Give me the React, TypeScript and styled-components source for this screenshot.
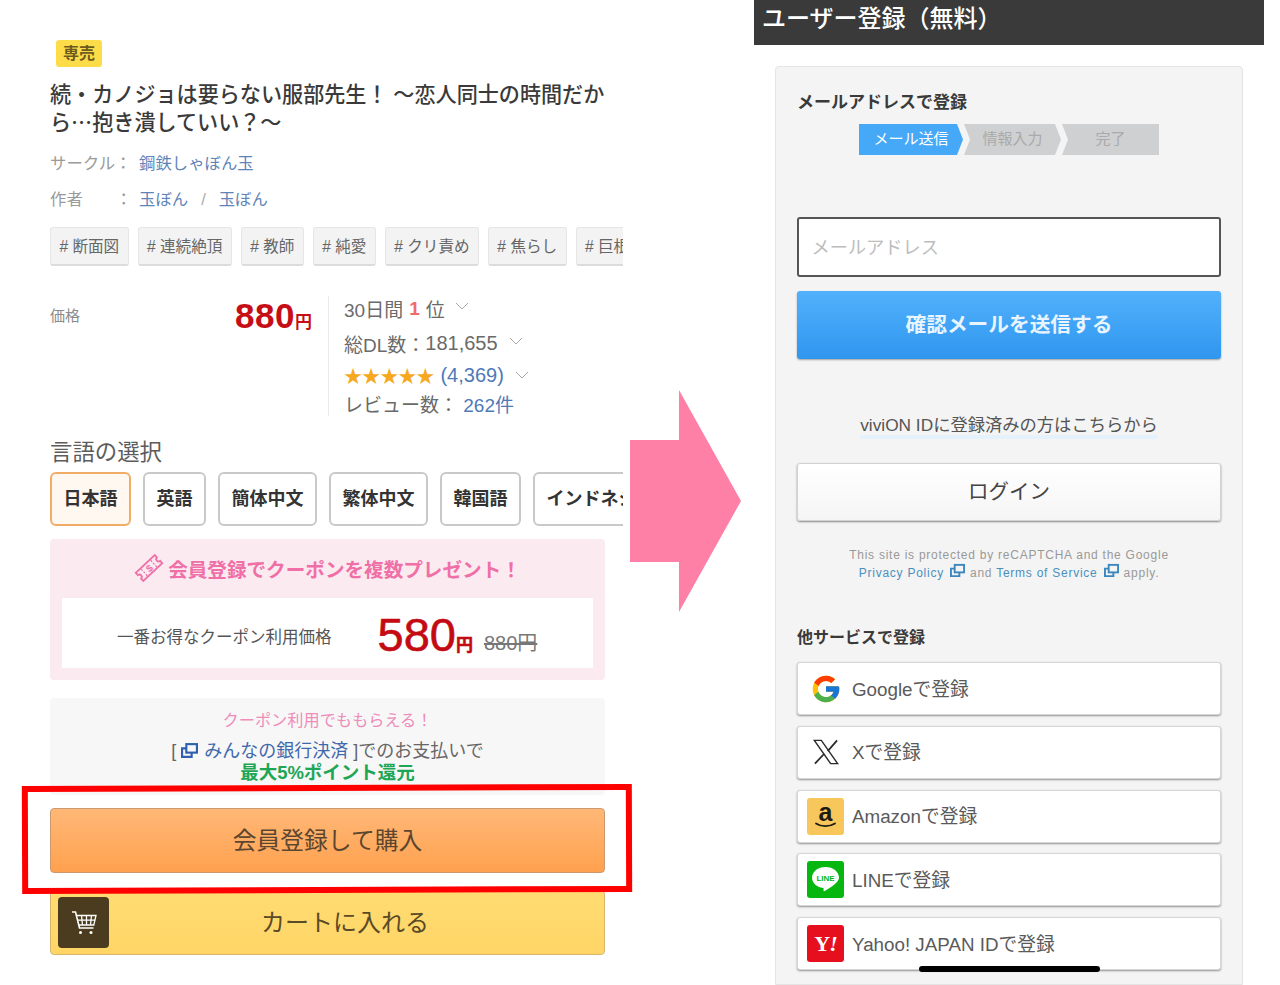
import React from "react";
import styled, { createGlobalStyle } from "styled-components";
import { FcGoogle } from "react-icons/fc";

const GlobalStyle = createGlobalStyle`
  html, body {
    margin: 0;
    padding: 0;
    background: #fff;
  }
  * {
    box-sizing: border-box;
  }
  body {
    font-family: "Liberation Sans", "Noto Sans CJK JP", sans-serif;
  }
`;

const Page = styled.div`
  position: relative;
  width: 1280px;
  height: 985px;
  overflow: hidden;
  display: flex;
`;

const ProductColumn = styled.div`
  width: 630px;
  flex: none;
  padding: 40px 0 0 50px;
  display: flex;
  flex-direction: column;
`;

const Badge = styled.div`
  width: 46px;
  height: 27px;
  margin-left: 6px;
  border-radius: 3px;
  background: #fddc4a;
  color: #6d5a1c;
  font-size: 16px;
  font-weight: 700;
  line-height: 27px;
  text-align: center;
`;

const Title = styled.h1`
  height: 56px;
  margin: 14px 0 0;
  font-size: 21.1px;
  line-height: 28px;
  font-weight: 500;
  color: #3a3a3a;
  white-space: nowrap;
`;

const CjkGlyph = styled.span`
  font-family: "Noto Sans CJK JP", sans-serif;
  line-height: 0;
`;

const MetaRow = styled.div<{ $top: number }>`
  display: flex;
  height: 24px;
  margin-top: ${(p) => p.$top}px;
  font-size: 16.4px;
  line-height: 24px;
  color: #9a9a9a;
`;

const MetaLabel = styled.span`
  width: 89px;
  white-space: pre;
`;

const MetaLink = styled.span`
  color: #5f84b8;
`;

const MetaSlash = styled.span`
  margin: 0 13px;
  color: #aaa;
`;

const ClipRow = styled.div<{ $top: number; $gap: number }>`
  display: flex;
  gap: ${(p) => p.$gap}px;
  width: 573px;
  margin-top: ${(p) => p.$top}px;
  overflow: hidden;
`;

const Tag = styled.div`
  flex: none;
  height: 39px;
  padding: 0 8.4px;
  border: 1px solid #e6e6e6;
  border-bottom: 2px solid #dcdcdc;
  border-radius: 3px;
  background: #f3f3f3;
  color: #666;
  font-size: 15.6px;
  line-height: 37px;
  white-space: nowrap;
`;

const PriceBlock = styled.div`
  display: flex;
  height: 120px;
  margin-top: 30px;
`;

const PriceCell = styled.div`
  width: 262px;
  display: flex;
  justify-content: space-between;
  align-items: flex-start;
`;

const PriceLabel = styled.span`
  margin-top: 10px;
  font-size: 15px;
  line-height: 20px;
  color: #8b8b8b;
`;

const PriceValue = styled.span`
  margin-top: -1px;
  color: #c70d16;
  font-size: 35px;
  letter-spacing: 0.5px;
  line-height: 42px;
  font-weight: 700;
`;

const Yen = styled.span<{ $size: number }>`
  font-size: ${(p) => p.$size}px;
  font-weight: 700;
  letter-spacing: 0;
`;

const Stats = styled.div`
  margin-left: 16px;
  padding-left: 15px;
  border-left: 1px solid #e9e9e9;
  display: flex;
  flex-direction: column;
  font-size: 19px;
  color: #6a6a6a;
`;

const StatLine = styled.div<{ $height: number; $pad?: number }>`
  display: flex;
  align-items: center;
  height: ${(p) => p.$height}px;
  padding-top: ${(p) => p.$pad || 0}px;
  white-space: pre;
`;

const StatNumber = styled.span`
  font-size: 20px;
`;

const Rank = styled.span`
  color: #ef6a6a;
  font-weight: 700;
  margin: 0 6px;
`;

const Stars = styled.span`
  color: #f6a81f;
  font-size: 18.2px;
  letter-spacing: -0.1px;
  margin-right: 6px;
`;

const BlueText = styled.span`
  color: #4f79b8;
`;

const Chevron = styled.svg<{ $left: number; $lift: number }>`
  width: 14px;
  height: 8px;
  margin-left: ${(p) => p.$left}px;
  margin-top: -${(p) => p.$lift}px;
  fill: none;
  stroke: #a9a9a9;
  stroke-width: 1;
`;

const SectionTitle = styled.div`
  margin-top: 21px;
  height: 32px;
  font-size: 22.4px;
  line-height: 32px;
  color: #5c5c5c;
`;

const LangButton = styled.div<{ $active?: boolean }>`
  flex: none;
  height: 54px;
  padding: 0 11.5px;
  border: 2px solid ${(p) => (p.$active ? "#f1ad68" : "#c9c9c9")};
  border-radius: 6px;
  background: ${(p) => (p.$active ? "#fff8f0" : "#fff")};
  color: #333;
  font-size: 18px;
  font-weight: 700;
  line-height: 50px;
  white-space: nowrap;
`;

const CouponBox = styled.div`
  width: 555px;
  height: 141px;
  margin-top: 13px;
  padding: 12px;
  border-radius: 4px;
  background: #fbebf1;
  display: flex;
  flex-direction: column;
`;

const CouponHead = styled.div`
  height: 34px;
  display: flex;
  justify-content: center;
  align-items: center;
  gap: 4px;
  color: #ef6fa6;
  font-size: 19.6px;
  font-weight: 700;
`;

const CouponInner = styled.div`
  height: 70px;
  margin-top: 13px;
  padding: 6px 0 0 55px;
  background: #fff;
  display: flex;
  align-items: center;
  color: #555;
  font-size: 16.5px;
`;

const CouponPrice = styled.span`
  margin: 9px 0 0 46px;
  color: #c40a12;
  font-size: 47px;
  line-height: 56px;
  -webkit-text-stroke: 0.6px #c40a12;
`;

const OldPrice = styled.span`
  margin: 10px 0 0 11px;
  color: #777;
  font-size: 20px;
  text-decoration: line-through;
`;

const PointBox = styled.div`
  width: 555px;
  height: 97px;
  margin-top: 18px;
  padding-top: 10px;
  border-radius: 4px;
  background: #f7f7f7;
  text-align: center;
`;

const PointLead = styled.div`
  height: 24px;
  line-height: 24px;
  color: #ee8dba;
  font-size: 16.2px;
`;

const PointLine = styled.div`
  height: 34px;
  padding-top: 3px;
  line-height: 34px;
  color: #666;
  font-size: 18px;
  display: flex;
  justify-content: center;
  align-items: center;
  white-space: pre;
`;

const PointLink = styled.span`
  color: #3f69ad;
  margin-left: 6px;
`;

const PointGreen = styled.div`
  height: 20px;
  margin-top: -3px;
  line-height: 20px;
  color: #1ea655;
  font-size: 18.5px;
  font-weight: 700;
`;

const BuyButton = styled.div`
  width: 555px;
  height: 65px;
  margin-top: 13px;
  border: 1px solid #cc9870;
  border-radius: 4px;
  background: linear-gradient(#ffb877, #ffa14f);
  color: #5b4630;
  font-size: 23.8px;
  line-height: 63px;
  text-align: center;
`;

const CartButton = styled.div`
  width: 555px;
  height: 65px;
  margin-top: 17px;
  padding: 6px 23px 6px 7px;
  border: 1px solid #d8b56d;
  border-radius: 4px;
  background: linear-gradient(#ffdc72, #ffd566);
  color: #5a4a26;
  font-size: 24px;
  display: flex;
  align-items: center;
`;

const CartTile = styled.div`
  width: 51px;
  height: 51px;
  flex: none;
  border-radius: 4px;
  background: #4c3c1f;
  display: flex;
  align-items: center;
  justify-content: center;
`;

const CartLabel = styled.span`
  flex: 1;
  margin-top: -4px;
  text-align: center;
`;

const ArrowColumn = styled.div`
  width: 124px;
  flex: none;
  padding-top: 390px;
`;

const ArrowShape = styled.svg`
  display: block;
  width: 111px;
  height: 222px;
  fill: #ff80a6;
`;

const RegisterColumn = styled.div`
  width: 510px;
  flex: none;
  display: flex;
  flex-direction: column;
`;

const Header = styled.div`
  height: 45px;
  padding: 0 0 6px 8px;
  background: #3a3a3a;
  color: #fff;
  font-size: 24px;
  font-weight: 500;
  line-height: 38px;
`;

const Card = styled.div`
  width: 468px;
  flex: 1;
  margin: 21px 0 0 21px;
  padding: 24px 21px 0;
  border: 1px solid #e4e4e4;
  border-radius: 4px 4px 0 0;
  background: #f4f4f4;
`;

const CardHeading = styled.div`
  font-size: 17px;
  line-height: 24px;
  font-weight: 700;
  color: #3a3a3a;
`;

const Stepper = styled.div`
  display: flex;
  margin: 9px 0 0 62px;
`;

const Step = styled.div<{ $state: "current" | "todo"; $width: number; $first?: boolean }>`
  width: ${(p) => p.$width}px;
  height: 31px;
  margin-left: ${(p) => (p.$first ? 0 : 1)}px;
  background: ${(p) => (p.$state === "current" ? "#45a9f8" : "#cfd0d1")};
  color: ${(p) => (p.$state === "current" ? "#fff" : "#aaa")};
  font-size: 15px;
  line-height: 30px;
  text-align: center;
  clip-path: ${(p) =>
    p.$first
      ? "polygon(0 0, calc(100% - 6px) 0, 100% 50%, calc(100% - 6px) 100%, 0 100%)"
      : "polygon(0 0, calc(100% - 6px) 0, 100% 50%, calc(100% - 6px) 100%, 0 100%, 6px 50%)"};
  &:last-child {
    clip-path: polygon(0 0, 100% 0, 100% 100%, 0 100%, 6px 50%);
  }
`;

const EmailInput = styled.input`
  display: block;
  width: 424px;
  height: 60px;
  margin-top: 62px;
  padding: 3px 12.5px 0;
  border: 2px solid #555;
  border-radius: 3px;
  background: #fff;
  font-family: inherit;
  font-size: 18.2px;
  &::placeholder {
    color: #bdbdbd;
    opacity: 1;
  }
`;

const SendButton = styled.div`
  width: 424px;
  height: 68px;
  margin-top: 14px;
  border-radius: 3px;
  background: linear-gradient(#52b1fb, #2f96ef);
  box-shadow: 0 1px 2px rgba(0, 0, 0, 0.35);
  color: #e8f4ff;
  font-size: 20.7px;
  font-weight: 700;
  line-height: 67px;
  text-align: center;
`;

const LoginLead = styled.div`
  margin-top: 53px;
  height: 26px;
  text-align: center;
  color: #555;
  font-size: 17.3px;
  line-height: 26px;
`;

const LoginLeadText = styled.span`
  padding-bottom: 4px;
  background: linear-gradient(transparent 85%, #e6f2fb 85%);
`;

const LoginButton = styled.div`
  width: 424px;
  height: 58px;
  margin-top: 25px;
  border: 1px solid #d2d2d2;
  border-radius: 3px;
  background: linear-gradient(#fff, #f5f5f5);
  box-shadow: 0 1px 2px rgba(0, 0, 0, 0.45);
  color: #444;
  font-size: 20.5px;
  line-height: 56px;
  text-align: center;
`;

const Recaptcha = styled.div`
  margin-top: 25px;
  color: #999;
  font-size: 12px;
  line-height: 18px;
  letter-spacing: 0.75px;
  text-align: center;
`;

const RecaptchaLink = styled.span`
  color: #4a90bf;
`;

const LinkGlyph = styled.svg<{ $size: number; $inline?: boolean }>`
  width: ${(p) => p.$size}px;
  height: ${(p) => p.$size}px;
  flex: none;
  fill: none;
  stroke-width: 2;
  margin: ${(p) => (p.$inline ? "-4px 1px 0 6px" : "0")};
  vertical-align: ${(p) => (p.$inline ? "-1px" : "baseline")};
`;

const OtherHeading = styled(CardHeading)`
  margin-top: 44px;
  font-size: 16px;
`;

const SsoList = styled.div`
  display: flex;
  flex-direction: column;
  gap: 10.8px;
  margin-top: 12px;
`;

const SsoRow = styled.div`
  height: 53px;
  padding: 0 0 3px 9px;
  border: 1px solid #d6d6d6;
  border-radius: 3px;
  background: #fff;
  box-shadow: 0 1px 2px rgba(0, 0, 0, 0.4);
  display: flex;
  align-items: center;
  gap: 8px;
  color: #5a5a5a;
  font-size: 18.8px;
`;

const SsoTile = styled.div<{ $bg?: string }>`
  width: 37px;
  height: 37px;
  flex: none;
  margin-top: 3px;
  border-radius: 3px;
  background: ${(p) => p.$bg || "transparent"};
  display: flex;
  align-items: center;
  justify-content: center;
`;

const YahooMark = styled.span`
  color: #fff;
  font-family: "Liberation Serif", serif;
  font-size: 22px;
  font-weight: 700;
  letter-spacing: -1px;
`;

const YahooBang = styled.span`
  font-style: italic;
`;

const RedFrame = styled.div`
  position: absolute;
  left: 22px;
  top: 785px;
  width: 610px;
  height: 108px;
  border: 6px solid #f00;
  transform: rotate(-0.2deg);
  pointer-events: none;
`;

const HomeBar = styled.div`
  position: absolute;
  left: 919px;
  top: 966px;
  width: 181px;
  height: 6px;
  border-radius: 3px;
  background: #000;
`;

const ExternalIcon = ({ color, size, inline }: { color: string; size: number; inline?: boolean }) => (
  <LinkGlyph $size={size} $inline={inline} viewBox="0 0 16 16" stroke={color}>
    <rect x="5" y="2" width="10" height="8" />
    <path d="M5 6H1v8h9v-4" />
  </LinkGlyph>
);

const Caret = ({ left, lift }: { left: number; lift: number }) => (
  <Chevron $left={left} $lift={lift} viewBox="0 0 14 8">
    <path d="M1 1l6 6 6-6" />
  </Chevron>
);

const tags = ["断面図", "連続絶頂", "教師", "純愛", "クリ責め", "焦らし", "巨根"];
const languages = ["日本語", "英語", "簡体中文", "繁体中文", "韓国語", "インドネシア語"];

const App = () => {
  return (
    <Page>
      <GlobalStyle />
      <ProductColumn>
        <Badge>専売</Badge>
        <Title>
          続・カノジョは要らない服部先生！ ～恋人同士の時間だか
          <br />
          ら<CjkGlyph>…</CjkGlyph>抱き潰していい？～
        </Title>
        <MetaRow $top={14}>
          <MetaLabel>サークル：</MetaLabel>
          <MetaLink>鋼鉄しゃぼん玉</MetaLink>
        </MetaRow>
        <MetaRow $top={12}>
          <MetaLabel>作者　　：</MetaLabel>
          <MetaLink>玉ぼん</MetaLink>
          <MetaSlash>/</MetaSlash>
          <MetaLink>玉ぼん</MetaLink>
        </MetaRow>
        <ClipRow $top={16} $gap={9}>
          {tags.map((t) => (
            <Tag key={t}># {t}</Tag>
          ))}
        </ClipRow>
        <PriceBlock>
          <PriceCell>
            <PriceLabel>価格</PriceLabel>
            <PriceValue>
              880<Yen $size={17}>円</Yen>
            </PriceValue>
          </PriceCell>
          <Stats>
            <StatLine $height={25}>
              30日間<Rank>1</Rank>位
              <Caret left={10} lift={6} />
            </StatLine>
            <StatLine $height={44}>
              総DL数：<StatNumber>181,655</StatNumber>
              <Caret left={11} lift={4} />
            </StatLine>
            <StatLine $height={20}>
              <Stars>★★★★★</Stars>
              <BlueText>
                <StatNumber>(4,369)</StatNumber>
              </BlueText>
              <Caret left={11} lift={0} />
            </StatLine>
            <StatLine $height={29} $pad={8}>
              レビュー数： <BlueText>262件</BlueText>
            </StatLine>
          </Stats>
        </PriceBlock>
        <SectionTitle>言語の選択</SectionTitle>
        <ClipRow $top={3} $gap={12}>
          {languages.map((l, i) => (
            <LangButton key={l} $active={i === 0}>
              {l}
            </LangButton>
          ))}
        </ClipRow>
        <CouponBox>
          <CouponHead>
            <svg width="30" height="30" viewBox="0 0 30 30" fill="none" stroke="#ef6fa6">
              <g transform="rotate(-43 15 15)">
                <path
                  strokeWidth="1.8"
                  d="M2 9.500h26v3.200a2.300 2.300 0 0 0 0 4.600v3.200H2v-3.200a2.300 2.300 0 0 0 0-4.600z"
                />
                <path strokeWidth="1.200" strokeDasharray="2 1.500" d="M8.500 10.500v9M21.500 10.500v9" />
                <text x="15" y="19" textAnchor="middle" fontSize="10" fontWeight="700" fill="#ef6fa6" stroke="none">
                  $
                </text>
              </g>
            </svg>
            会員登録でクーポンを複数プレゼント！
          </CouponHead>
          <CouponInner>
            一番お得なクーポン利用価格
            <CouponPrice>
              580<Yen $size={17}>円</Yen>
            </CouponPrice>
            <OldPrice>880円</OldPrice>
          </CouponInner>
        </CouponBox>
        <PointBox>
          <PointLead>クーポン利用でももらえる！</PointLead>
          <PointLine>
            [ <ExternalIcon color="#2f5fae" size={17} />
            <PointLink>みんなの銀行決済 </PointLink>]でのお支払いで
          </PointLine>
          <PointGreen>最大5%ポイント還元</PointGreen>
        </PointBox>
        <BuyButton>会員登録して購入</BuyButton>
        <CartButton>
          <CartTile>
            <svg width="28" height="28" viewBox="0 0 28 28" fill="none" stroke="#fff" strokeWidth="1.3">
              <path d="M2 3h3.500l4 16h14" strokeWidth="1.600" />
              <path d="M6.500 6.500H26l-2.200 9.500H9M11.500 6.500l1 9.500M16.500 6.500V16M21.500 6.500L20.500 16M7.500 11.200h17.400" />
              <circle cx="10.500" cy="23.500" r="1.500" fill="#fff" stroke="none" />
              <circle cx="21" cy="23.500" r="1.500" fill="#fff" stroke="none" />
            </svg>
          </CartTile>
          <CartLabel>カートに入れる</CartLabel>
        </CartButton>
      </ProductColumn>

      <ArrowColumn>
        <ArrowShape viewBox="0 0 111 222">
          <path d="M0 50h49V0l62 111-62 111v-50H0z" />
        </ArrowShape>
      </ArrowColumn>

      <RegisterColumn>
        <Header>ユーザー登録（無料）</Header>
        <Card>
          <CardHeading>メールアドレスで登録</CardHeading>
          <Stepper>
            <Step $state="current" $width={104} $first>
              メール送信
            </Step>
            <Step $state="todo" $width={97}>
              情報入力
            </Step>
            <Step $state="todo" $width={97}>
              完了
            </Step>
          </Stepper>
          <EmailInput placeholder="メールアドレス" />
          <SendButton>確認メールを送信する</SendButton>
          <LoginLead>
            <LoginLeadText>viviON IDに登録済みの方はこちらから</LoginLeadText>
          </LoginLead>
          <LoginButton>ログイン</LoginButton>
          <Recaptcha>
            This site is protected by reCAPTCHA and the Google
            <br />
            <RecaptchaLink>Privacy Policy</RecaptchaLink>
            <ExternalIcon color="#3b86bd" size={15} inline /> and{" "}
            <RecaptchaLink>Terms of Service</RecaptchaLink>
            <ExternalIcon color="#3b86bd" size={15} inline /> apply.
          </Recaptcha>
          <OtherHeading>他サービスで登録</OtherHeading>
          <SsoList>
            <SsoRow>
              <SsoTile>
                <FcGoogle size={32} />
              </SsoTile>
              Googleで登録
            </SsoRow>
            <SsoRow>
              <SsoTile>
                <svg width="28" height="28" viewBox="0 0 24 24" fill="none" stroke="#2a2a2a">
                  <path strokeWidth="1.200" d="M2 2h6l14 20h-6z" />
                  <path strokeWidth="1.500" d="M21.500 2l-8 9.200M10.500 13.500L2.500 22" />
                </svg>
              </SsoTile>
              Xで登録
            </SsoRow>
            <SsoRow>
              <SsoTile $bg="#f7c75c">
                <svg width="37" height="37" viewBox="0 0 37 37" fill="none">
                  <text x="18.500" y="23" textAnchor="middle" fontSize="25" fontWeight="700" fill="#1d1a14" fontFamily="Liberation Sans, sans-serif">
                    a
                  </text>
                  <path stroke="#1d1a14" strokeWidth="1.800" strokeLinecap="round" d="M9 25.500c5.500 3.600 13 3.600 19 0" />
                </svg>
              </SsoTile>
              Amazonで登録
            </SsoRow>
            <SsoRow>
              <SsoTile $bg="#06b710">
                <svg width="31" height="31" viewBox="0 0 31 31">
                  <path
                    fill="#fff"
                    d="M15.500 3C8 3 2 7.700 2 13.600c0 5.300 4.700 9.700 11 10.500.9.200.7 1 .5 2.300 0 .6.300 1 1.200.6 2-1 9.800-5.700 12.500-9.200 1.200-1.500 1.800-2.800 1.800-4.200C29 7.700 23 3 15.500 3z"
                  />
                  <text x="15.500" y="17" textAnchor="middle" fontSize="8" fontWeight="700" fill="#06b710">
                    LINE
                  </text>
                </svg>
              </SsoTile>
              LINEで登録
            </SsoRow>
            <SsoRow>
              <SsoTile $bg="#e60f1e">
                <YahooMark>
                  Y<YahooBang>!</YahooBang>
                </YahooMark>
              </SsoTile>
              Yahoo! JAPAN IDで登録
            </SsoRow>
          </SsoList>
        </Card>
      </RegisterColumn>

      <RedFrame />
      <HomeBar />
    </Page>
  );
};

export default App;
